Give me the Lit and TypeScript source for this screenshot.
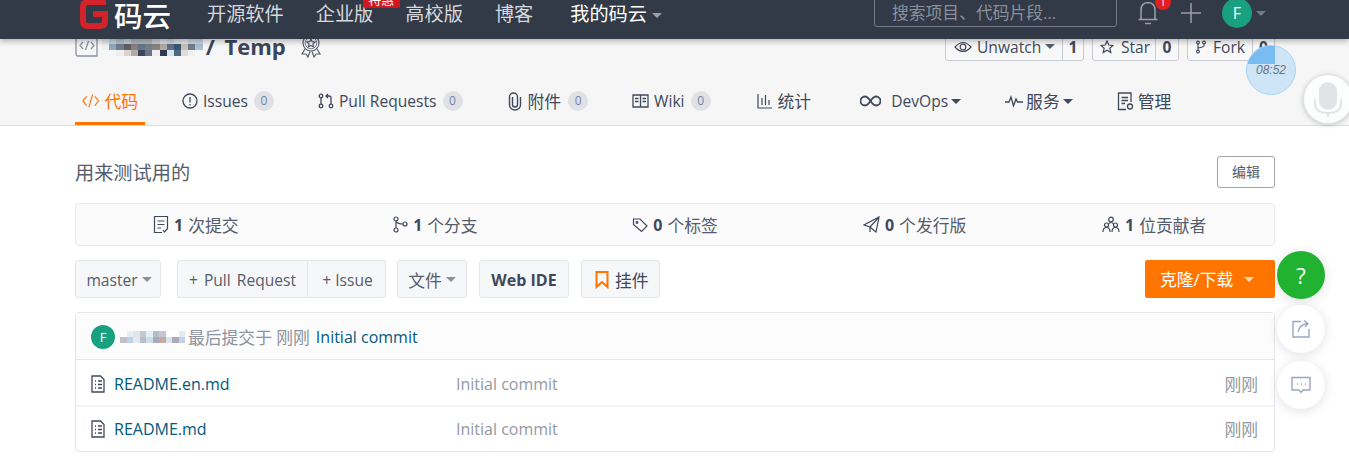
import { css, html, LitElement, svg } from "lit";
import { customElement } from "lit/decorators.js";

const caret = html`<i class="caret"></i>`;

// mosaic rows that hide the user name
const nameRows = [
  ["#e4e7ec", "#c9d2da", "#b4c0cc", "#c5ccd4", "#aab5c1", "#b0b6bc", "#b3b3b6", "#c7cdd4", "#d5dde5", "#c9d4df", "#d8dfe6", "#e3e5e6", "#cfd5db", "#c5d4e4"],
  ["#eef1f4", "#8fa6bb", "#6f7d8c", "#5e5e66", "#8a7f80", "#677585", "#717e8c", "#8a8080", "#b3a8a0", "#5e7188", "#3c5570", "#c9c0b5", "#6e7c8d", "#a9bdd3"],
  ["#f6f6f6", "#f6f6f6", "#f0eeee", "#d8d4d4", "#b5aaa6", "#3a4560", "#6a7285", "#f0eeee", "#2f3a55", "#d8e4ec", "#4d6a85", "#e0dcd8", "#f0f0f0", "#f6f6f6"],
];
const authorRows = [
  ["#fff", "#e8edf2", "#dfe5eb", "#c3c9d2", "#dff2f8", "#b5bcc8", "#c3c9d2", "#fff", "#fff", "#e4ebf6"],
  ["#c2c0c8", "#bfd3e4", "#e5e8ec", "#b7bfc9", "#c9e0ea", "#a9a9b8", "#c7aaa8", "#d6e6f0", "#b0aab6", "#c3d3ea"],
];

const icon = (w: number, h: number, body: unknown, cls = "") =>
  html`<svg class="ic ${cls}" width=${w} height=${h} viewBox="0 0 ${w} ${h}" fill="none" stroke="currentColor" stroke-width="1.3">${body}</svg>`;

const fileIcon = icon(16, 18, svg`<path d="M2 1h8.500L14 4.500V17H2zM5 6h1M8 6h4M5 9.500h1M8 9.500h4M5 13h1M8 13h4"/>`);

@customElement("app-root")
class AppRoot extends LitElement {
  static styles = css`
    :host {
      display: block;
      position: relative;
      width: 1349px;
      height: 468px;
      overflow: hidden;
      background: #fff;
      color: #40485b;
      font-family: "Open Sans", "Noto Sans CJK SC", sans-serif;
      font-size: 15.6px;
    }
    .wrap {
      padding: 0 74px 0 75px;
    }
    .top {
      position: relative;
      z-index: 3;
      height: 39px;
      background: #323947;
      box-shadow: 0 2px 6px rgba(0, 0, 0, 0.3);
      overflow: hidden;
    }
    .top .wrap {
      display: flex;
      align-items: center;
      height: 26px;
      padding-right: 83px;
      color: #d5d8dd;
      font-size: 19.2px;
    }
    .logo {
      display: flex;
      align-items: center;
      flex: none;
      width: 132px;
      height: 26px;
      padding: 2px 0 0 5px;
      box-sizing: border-box;
      color: #fff;
    }
    .logo svg {
      flex: none;
    }
    .logo b {
      font-size: 28.500px;
      font-weight: 500;
      margin-left: 6px;
      white-space: nowrap;
    }
    .nav {
      display: flex;
      gap: 32px;
    }
    .nav span {
      position: relative;
      white-space: nowrap;
    }
    .nav .me {
      color: #fff;
      margin-left: 5px;
    }
    .hot {
      position: absolute;
      left: 47px;
      top: -8px;
      width: 37px;
      height: 17px;
      line-height: 16px;
      border-radius: 2px;
      background: #d0191f;
      color: #fff;
      font-size: 13px;
      font-style: normal;
      text-align: center;
    }
    .caret {
      display: inline-block;
      width: 0;
      height: 0;
      margin-left: 5px;
      vertical-align: 3px;
      border-top: 5px solid currentColor;
      border-left: 5px solid transparent;
      border-right: 5px solid transparent;
    }
    .nav .caret {
      color: #99a0ad;
    }
    .search {
      margin-left: auto;
      box-sizing: border-box;
      width: 243px;
      height: 41px;
      margin-top: -14px;
      padding: 14px 0 0 17px;
      border: 1px solid #747b88;
      border-radius: 3px;
      color: #8a909b;
      font-size: 16.800px;
      line-height: 24px;
    }
    .bell {
      position: relative;
      margin-left: 20px;
      width: 24px;
      color: #9aa0ab;
      display: flex;
    }
    .dot {
      position: absolute;
      left: 18px;
      top: -6px;
      width: 16px;
      height: 16px;
      border-radius: 50%;
      background: #e02020;
      color: #fff;
      font-size: 11px;
      line-height: 16px;
      text-align: center;
    }
    .plus {
      margin-left: 19px;
      color: #9aa0ab;
      display: flex;
    }
    .avatar {
      display: inline-flex;
      align-items: center;
      justify-content: center;
      border-radius: 50%;
      background: #18a07f;
      color: #fff;
      flex: none;
    }
    .top .avatar {
      margin-left: 20px;
      width: 30px;
      height: 30px;
      font-size: 16px;
    }
    .top .me-caret {
      margin-left: 4px;
      color: #737a87;
    }
    .band {
      background: #f6f6f6;
      border-bottom: 1px solid #dcdcdc;
      height: 86px;
      overflow: hidden;
    }
    .title {
      display: flex;
      align-items: center;
      height: 30px;
      margin-top: -8px;
    }
    .repo-ic {
      color: #8a93a3;
      margin-right: 3px;
    }
    .mosaic {
      display: grid;
      grid-auto-flow: row;
      line-height: 0;
      margin-right: 3px;
    }
    .title .mosaic {
      margin-top: 2px;
    }
    .mosaic div {
      display: flex;
    }
    .mosaic span {
      display: block;
      width: 7.200px;
      height: 6px;
    }
    .title b {
      font-size: 22px;
      font-weight: 700;
      word-spacing: 4px;
      color: #3c4559;
      margin-right: 14px;
      white-space: nowrap;
    }
    .badge-ic {
      color: #555e70;
    }
    .social {
      margin-left: auto;
      display: flex;
      gap: 8px;
    }
    .group {
      display: flex;
      height: 30px;
      box-sizing: border-box;
      border: 1px solid #c8ccd2;
      border-radius: 3px;
      background: #f8f8f8;
      font-size: 15.6px;
      line-height: 28px;
      white-space: nowrap;
    }
    .group span {
      display: flex;
      align-items: center;
      box-sizing: border-box;
      padding: 1px 0 0 8px;
      gap: 5px;
    }
    .group.w {
      width: 139px;
    }
    .group.w span {
      width: 116px;
    }
    .group.s {
      width: 87px;
    }
    .group.s span {
      width: 62px;
      padding-left: 7px;
      gap: 7px;
    }
    .group.f {
      width: 88px;
    }
    .group.f span {
      width: 64px;
      gap: 7px;
    }
    .group .caret {
      margin-left: -1px;
      vertical-align: 0;
      color: #555e70;
    }
    .group em {
      flex: 1;
      padding-top: 1px;
      font-style: normal;
      font-weight: 700;
      text-align: center;
      border-left: 1px solid #c8ccd2;
    }
    .tabs {
      display: flex;
      gap: 30px;
      height: 50px;
      margin-top: 14px;
    }
    .tab {
      display: flex;
      align-items: center;
      height: 50px;
      box-sizing: border-box;
      padding: 4px 7px 2px;
      gap: 5px;
      white-space: nowrap;
    }
    .tab.on {
      color: #ff7500;
      border-bottom: 3px solid #ff7500;
      padding-bottom: 0;
      width: 70px;
      font-size: 16.800px;
    }
    .tab .cn {
      font-size: 16.800px;
    }
    .tab .pair-cap {
      display: flex;
      align-items: center;
      gap: 3px;
    }
    .tab .caret {
      margin-left: 0;
      vertical-align: 0;
    }
    .tab.attach {
      margin-left: 1px;
      gap: 6px;
    }
    .tab.chart {
      margin-left: 2px;
    }
    .tab.devops {
      margin-left: 5px;
      gap: 10px;
    }
    .tab.service {
      gap: 3px;
    }
    .tab.admin {
      gap: 4px;
    }
    .count {
      box-sizing: border-box;
      width: 20px;
      height: 20px;
      margin-left: 1px;
      border-radius: 50%;
      background: #dfe1e5;
      color: #6f84a6;
      font-size: 12px;
      line-height: 20px;
      text-align: center;
    }
    .desc {
      display: flex;
      align-items: center;
      justify-content: space-between;
      height: 32px;
      margin-top: 30px;
      font-size: 19.2px;
      color: #555c6b;
    }
    .edit {
      box-sizing: border-box;
      width: 58px;
      height: 32px;
      border: 1px solid #a0a4aa;
      border-radius: 3px;
      font-size: 14px;
      line-height: 30px;
      text-align: center;
    }
    .stats {
      display: grid;
      grid-template-columns: repeat(5, 1fr);
      box-sizing: border-box;
      height: 43px;
      margin-top: 15px;
      border: 1px solid #e8e9ec;
      border-radius: 4px;
      background: #fbfbfc;
      font-size: 16.800px;
    }
    .stats div {
      display: flex;
      align-items: center;
      justify-content: center;
      gap: 5px;
      white-space: nowrap;
    }
    .stats b {
      font-weight: 700;
      font-size: 16px;
    }
    .stats span {
      color: #555c6b;
    }
    .tools {
      display: flex;
      height: 38px;
      margin-top: 14px;
    }
    .btn {
      display: flex;
      align-items: center;
      justify-content: center;
      box-sizing: border-box;
      height: 38px;
      padding-top: 1px;
      border: 1px solid #e3e6ea;
      border-radius: 3px;
      background: #f6f7f8;
      color: #555c6b;
      white-space: nowrap;
    }
    .btn .caret {
      color: #8a909b;
      margin-left: 4px;
      vertical-align: 0;
    }
    .branch {
      width: 86px;
      padding-left: 2px;
    }
    .pair {
      display: flex;
      margin-left: 16px;
    }
    .pair .btn:first-child {
      border-radius: 3px 0 0 3px;
      width: 131px;
      word-spacing: 2px;
    }
    .pair .btn:last-child {
      border-radius: 0 3px 3px 0;
      border-left: 0;
      width: 78px;
      padding-left: 2px;
    }
    .menu {
      margin-left: 11px;
      width: 70px;
      font-size: 16.800px;
    }
    .ide {
      margin-left: 12px;
      font-weight: 700;
      font-size: 16px;
      color: #40485b;
      width: 90px;
    }
    .widget {
      margin-left: 12px;
      width: 79px;
      color: #40485b;
      gap: 6px;
      justify-content: flex-start;
      padding-left: 13px;
      font-size: 16.800px;
    }
    .widget svg {
      color: #ff7500;
    }
    .clone {
      margin-left: auto;
      display: flex;
      align-items: center;
      gap: 11px;
      box-sizing: border-box;
      width: 130px;
      height: 38px;
      padding-left: 15px;
      border-radius: 2px;
      background: #ff7500;
      color: #fff;
      font-size: 16.800px;
    }
    .clone .caret {
      color: #ffd9b8;
      margin-left: 0;
      vertical-align: 0;
    }
    .files {
      box-sizing: border-box;
      height: 140px;
      margin-top: 14px;
      border: 1px solid #e3e6ea;
      border-radius: 4px;
      font-size: 16px;
    }
    .head {
      display: flex;
      align-items: center;
      box-sizing: border-box;
      height: 47px;
      padding: 1px 0 0 15px;
      background: #fcfcfc;
      border-bottom: 1px solid #e3e6ea;
      color: #8e939d;
      white-space: nowrap;
    }
    .head .avatar {
      width: 24px;
      height: 24px;
      font-size: 13px;
      margin-right: 5px;
    }
    .head .mosaic span {
      width: 6.500px;
      height: 6px;
    }
    .who {
      font-size: 16.800px;
    }
    .head a {
      color: #005980;
      margin-left: 6px;
    }
    .row {
      display: flex;
      align-items: center;
      box-sizing: border-box;
      height: 45px;
      padding: 3px 16px 0 15px;
    }
    .row + .row {
      border-top: 2px solid #f2f4f8;
      height: 46px;
      padding-top: 0;
    }
    .row svg {
      margin: 0 8px 0 -1px;
      color: #40485b;
    }
    .row a {
      width: 342px;
      color: #005980;
    }
    .row span {
      color: #9399a3;
    }
    .row .cn {
      margin-left: auto;
      font-size: 16.800px;
    }
    .fab {
      position: absolute;
      left: 1277px;
      width: 48px;
      height: 48px;
      display: flex;
      align-items: center;
      justify-content: center;
      border-radius: 50%;
      background: #fff;
      color: #9aa5c0;
      box-shadow: 0 2px 12px rgba(0, 0, 0, 0.12);
    }
    .fab.help {
      top: 251px;
      background: #22b232;
      color: #fff;
      font-size: 22px;
    }
    .fab.share {
      top: 305px;
    }
    .fab.chat {
      top: 361px;
    }
    .timer {
      position: absolute;
      z-index: 2;
      left: 1246px;
      top: 45px;
      width: 50px;
      height: 50px;
      box-sizing: border-box;
      border: 1px solid #a9d6f8;
      border-radius: 50%;
      background: linear-gradient(#79bcf2, #79bcf2) 0 0 / 28px 18px no-repeat,
        rgba(120, 195, 250, 0.33);
      color: #6a727c;
      font-size: 12px;
      font-style: italic;
      line-height: 48px;
      text-align: center;
      font-family: "Liberation Sans", sans-serif;
    }
    .mic {
      position: absolute;
      z-index: 2;
      left: 1303px;
      top: 74px;
      width: 50px;
      height: 50px;
      display: flex;
      align-items: center;
      justify-content: center;
      border-radius: 50%;
      background: #fdfefe;
      border: 1px solid #dfe3e6;
      box-sizing: border-box;
      box-shadow: 0 1px 5px rgba(0, 0, 0, 0.2);
      color: #e0e4e6;
    }
  `;

  mosaic(rows: string[][]) {
    return html`<div class="mosaic">
      ${rows.map(
        (r) => html`<div>${r.map((c) => html`<span style="background:${c}"></span>`)}</div>`,
      )}
    </div>`;
  }

  render() {
    return html`
      <div class="top">
        <div class="wrap">
          <div class="logo">
            <svg width="28" height="34" viewBox="0 0 28 34" fill="none" stroke="#d2232a" stroke-width="6">
              <path d="M26 5H8Q3 5 3 10V24Q3 29 8 29H20Q25 29 25 24V17H13"/>
            </svg>
            <b>码云</b>
          </div>
          <div class="nav">
            <span>开源软件</span>
            <span>企业版<i class="hot">特惠</i></span>
            <span>高校版</span>
            <span>博客</span>
            <span class="me">我的码云${caret}</span>
          </div>
          <div class="search">搜索项目、代码片段...</div>
          <div class="bell">
            <svg width="22" height="26" viewBox="0 0 22 26" fill="none" stroke="currentColor" stroke-width="1.500">
              <path d="M4 19V10Q4 3 11 2.500Q18 3 18 10V19M1.500 19.500H20.500M8 23.500H14"/>
            </svg>
            <span class="dot">1</span>
          </div>
          <div class="plus">
            <svg width="22" height="22" viewBox="0 0 22 22" stroke="currentColor" stroke-width="1.500"><path d="M11 1V21M1 11H21"/></svg>
          </div>
          <span class="avatar">F</span>
          <i class="caret me-caret"></i>
        </div>
      </div>

      <div class="band">
        <div class="wrap">
          <div class="title">
            <svg class="repo-ic" width="24" height="24" viewBox="0 0 24 24" fill="none" stroke="currentColor" stroke-width="1.300">
              <path d="M3 1H22V22H3Q1 22 1 20V3Q1 1 3 1ZM8 8L5 11.500L8 15M16 8L19 11.500L16 15M13.500 7L10.500 16"/>
            </svg>
            ${this.mosaic(nameRows)}
            <b>/ Temp</b>
            <svg class="badge-ic" width="22" height="24" viewBox="0 0 22 24" fill="none" stroke="currentColor" stroke-width="1.200">
              <circle cx="11" cy="9" r="8"/><circle cx="11" cy="9" r="5.800" stroke-width="0.800"/><path d="M11 5L12.200 7.700L15 8L13 10L13.500 12.800L11 11.400L8.500 12.800L9 10L7 8L9.800 7.700ZM5 15L2 20L6 20L8 23L10 17.500M17 15L20 20L16 20L14 23L12 17.500"/>
            </svg>
            <div class="social">
              <div class="group w">
                <span>
                  <svg width="18" height="12" viewBox="0 0 18 12" fill="none" stroke="currentColor" stroke-width="1.200"><path d="M1 6Q9 -3 17 6Q9 15 1 6Z"/><circle cx="9" cy="6" r="2.800"/></svg>
                  Unwatch<i class="caret"></i>
                </span>
                <em>1</em>
              </div>
              <div class="group s">
                <span>
                  <svg width="14" height="14" viewBox="0 0 14 14" fill="none" stroke="currentColor" stroke-width="1.200"><path d="M7 1L8.800 5L13 5.400L9.800 8.200L10.800 12.600L7 10.300L3.200 12.600L4.200 8.200L1 5.400L5.200 5Z"/></svg>
                  Star
                </span>
                <em>0</em>
              </div>
              <div class="group f">
                <span>
                  <svg width="10" height="14" viewBox="0 0 10 14" fill="none" stroke="currentColor" stroke-width="1.100"><circle cx="2" cy="2.500" r="1.400"/><circle cx="8" cy="2.500" r="1.400"/><circle cx="2" cy="11.500" r="1.400"/><path d="M2 4V10M8 4V5.500Q8 7 2 8"/></svg>
                  Fork
                </span>
                <em>0</em>
              </div>
            </div>
          </div>
          <div class="tabs">
            <div class="tab on">
              <svg width="19" height="16" viewBox="0 0 19 16" fill="none" stroke="currentColor" stroke-width="1.300"><path d="M5 3L1 8L5 13M14 3L18 8L14 13M11.500 1L7.500 15"/></svg>
              代码
            </div>
            <div class="tab">
              <svg width="16" height="16" viewBox="0 0 16 16" fill="none" stroke="currentColor" stroke-width="1.300"><circle cx="8" cy="8" r="7"/><path d="M8 4V9.500M8 11V12.500"/></svg>
              Issues <span class="count">0</span>
            </div>
            <div class="tab">
              <svg width="16" height="16" viewBox="0 0 16 16" fill="none" stroke="currentColor" stroke-width="1.300"><circle cx="3" cy="3" r="1.800"/><circle cx="3" cy="13" r="1.800"/><circle cx="13" cy="13" r="1.800"/><path d="M3 5V11M13 11V4.500Q13 3 11 3H8M10 1L8 3L10 5"/></svg>
              Pull Requests <span class="count">0</span>
            </div>
            <div class="tab attach">
              <svg width="14" height="19" viewBox="0 0 14 19" fill="none" stroke="currentColor" stroke-width="1.400"><path d="M12.500 5V13A5.500 5 0 0 1 1.500 13V5A4 4 0 0 1 9.500 5V12.500A2.500 2.500 0 0 1 4.500 12.500V5"/></svg>
              <span class="cn">附件</span> <span class="count">0</span>
            </div>
            <div class="tab">
              <svg width="17" height="14" viewBox="0 0 17 14" fill="none" stroke="currentColor" stroke-width="1.300"><path d="M1 1H16V13H1ZM8.500 1V13M3 4.500H6.500M3 7.500H6.500M10.500 4.500H14M10.500 7.500H14"/></svg>
              Wiki <span class="count">0</span>
            </div>
            <div class="tab chart">
              <svg width="16" height="16" viewBox="0 0 16 16" fill="none" stroke="currentColor" stroke-width="1.200"><path d="M1 1V15H15M5 12V5M8.500 12V2M12 12V7"/></svg>
              <span class="cn">统计</span>
            </div>
            <div class="tab devops">
              <svg width="21" height="12" viewBox="0 0 21 12" fill="none" stroke="currentColor" stroke-width="1.800"><path d="M10.500 6Q7.500 1.500 5 1.500A4.500 4.500 0 0 0 5 10.500Q7.500 10.500 10.500 6Q13.500 1.500 16 1.500A4.500 4.500 0 0 1 16 10.500Q13.500 10.500 10.500 6Z"/></svg>
              <span class="pair-cap">DevOps${caret}</span>
            </div>
            <div class="tab service">
              <svg width="18" height="12" viewBox="0 0 18 12" fill="none" stroke="currentColor" stroke-width="1.300"><path d="M0 7H4L6 2L8.500 11L11 4L12.500 7H18"/></svg>
              <span class="cn pair-cap">服务${caret}</span>
            </div>
            <div class="tab admin">
              <svg width="17" height="19" viewBox="0 0 17 19" fill="none" stroke="currentColor" stroke-width="1.300"><path d="M9 17.500H1.500V1H14V10M4.500 5.500H11M4.500 8.500H11M4.500 11.500H8"/><circle cx="13" cy="14.500" r="2.500"/></svg>
              <span class="cn">管理</span>
            </div>
          </div>
        </div>
      </div>

      <div class="wrap">
        <div class="desc">
          <span>用来测试用的</span>
          <div class="edit">编辑</div>
        </div>
        <div class="stats">
          <div>
            <svg width="16" height="19" viewBox="0 0 16 19" fill="none" stroke="currentColor" stroke-width="1.200"><path d="M9 17.500H1.500V1.500H14.500V14M4.500 6H11.500M4.500 9.500H11.500M4.500 13H8M10 15L11.500 17L14.500 13.500"/></svg>
            <b>1</b><span>次提交</span>
          </div>
          <div>
            <svg width="15" height="17" viewBox="0 0 15 17" fill="none" stroke="currentColor" stroke-width="1.200"><circle cx="3" cy="3" r="2"/><circle cx="3" cy="14" r="2"/><circle cx="12" cy="8" r="2"/><path d="M3 5V12M3 5Q4 8 10 8"/></svg>
            <b>1</b><span>个分支</span>
          </div>
          <div>
            <svg width="16" height="16" viewBox="0 0 16 16" fill="none" stroke="currentColor" stroke-width="1.200"><path d="M1.500 2H8L15 9L9.500 14.500L1.500 7.500Z"/><circle cx="5" cy="5.500" r="0.800"/></svg>
            <b>0</b><span>个标签</span>
          </div>
          <div>
            <svg width="17" height="17" viewBox="0 0 17 17" fill="none" stroke="currentColor" stroke-width="1.200"><path d="M16 1L1 9L7 11L13 16ZM16 1L7 11V16"/></svg>
            <b>0</b><span>个发行版</span>
          </div>
          <div>
            <svg width="18" height="17" viewBox="0 0 18 17" fill="none" stroke="currentColor" stroke-width="1.200"><circle cx="9" cy="3.500" r="2.300"/><circle cx="4.500" cy="9" r="2"/><circle cx="13.500" cy="9" r="2"/><path d="M1 16Q1 11.500 4.500 11.500Q8 11.500 8 16M10 16Q10 11.500 13.500 11.500Q17 11.500 17 16M6.500 8Q9 5 11.500 8"/></svg>
            <b>1</b><span>位贡献者</span>
          </div>
        </div>

        <div class="tools">
          <div class="btn branch">master${caret}</div>
          <div class="pair">
            <div class="btn">+ Pull Request</div>
            <div class="btn">+ Issue</div>
          </div>
          <div class="btn menu">文件${caret}</div>
          <div class="btn ide">Web IDE</div>
          <div class="btn widget">
            <svg width="14" height="18" viewBox="0 0 14 18" fill="none" stroke="currentColor" stroke-width="2"><path d="M1.500 1H12.500V16L7 11L1.500 16Z"/></svg>
            挂件
          </div>
          <div class="clone">克隆/下载${caret}</div>
        </div>

        <div class="files">
          <div class="head">
            <span class="avatar">F</span>
            ${this.mosaic(authorRows)}
            <span class="who">最后提交于 刚刚</span>
            <a>Initial commit</a>
          </div>
          <div class="row">
            ${fileIcon}<a>README.en.md</a><span>Initial commit</span><span class="cn">刚刚</span>
          </div>
          <div class="row">
            ${fileIcon}<a>README.md</a><span>Initial commit</span><span class="cn">刚刚</span>
          </div>
        </div>
      </div>

      <div class="timer">08:52</div>
      <div class="mic">
        <svg width="30" height="40" viewBox="0 0 30 40" fill="none" stroke="currentColor" stroke-width="2">
          <rect x="7" y="4" width="16" height="26" rx="8" fill="currentColor"/>
          <path d="M2 20V24Q2 34 15 34Q28 34 28 24V20M15 34V38"/>
        </svg>
      </div>
      <div class="fab help">?</div>
      <div class="fab share">
        <svg width="20" height="20" viewBox="0 0 20 20" fill="none" stroke="currentColor" stroke-width="1.400"><path d="M10 2.500H2V18H18V10M7 13Q8 6 16 4.500M13 1.500L17 4.500L14 8"/></svg>
      </div>
      <div class="fab chat">
        <svg width="20" height="18" viewBox="0 0 20 18" fill="none" stroke="currentColor" stroke-width="1.400"><path d="M1 1.500H19V14H12L10 16.500L8 14H1ZM6 8H7M10 8H11M14 8H15"/></svg>
      </div>
    `;
  }
}
